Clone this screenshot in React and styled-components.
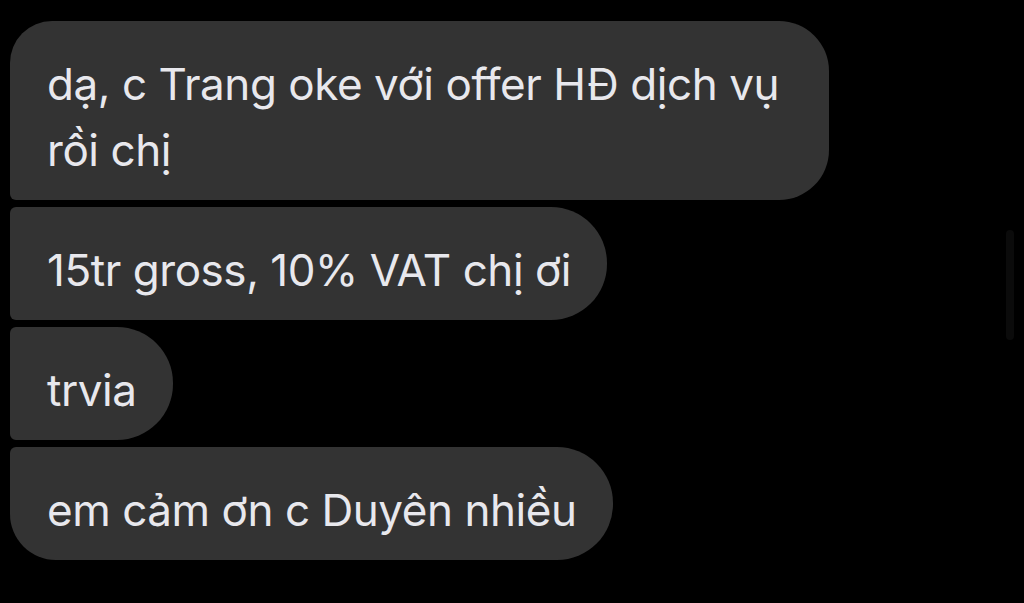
import styled, { createGlobalStyle } from "styled-components";

const GlobalStyle = createGlobalStyle`
  html, body {
    margin: 0;
    padding: 0;
    background: #000;
  }
  body {
    font-family: Inter, "Noto Sans", "Liberation Sans", sans-serif;
  }
`;

const Screen = styled.div`
  position: relative;
  width: 1024px;
  height: 603px;
  background: #000;
  overflow: hidden;
`;

const Thread = styled.div`
  display: flex;
  flex-direction: column;
  align-items: flex-start;
  gap: 7px;
  padding: 21px 0 0 10px;
`;

const radii = {
  first: "42px 50px 50px 6px",
  middle: "6px 56px 56px 6px",
  last: "6px 56px 56px 46px",
};

const Bubble = styled.div`
  box-sizing: border-box;
  max-width: 819px;
  padding: 30px 36px 17px 37px;
  background: #333333;
  color: #e8e8ed;
  font-size: 44px;
  line-height: 66px;
  letter-spacing: -0.45px;
  border-radius: ${(p) => radii[p.$pos]};
`;

const ScrollThumb = styled.div`
  position: absolute;
  left: 1006px;
  top: 230px;
  width: 8px;
  height: 110px;
  border-radius: 4px;
  background: #0b0b0b;
`;

const messages = [
  { text: "dạ, c Trang oke với offer HĐ dịch vụ rồi chị", pos: "first" },
  { text: "15tr gross, 10% VAT chị ơi", pos: "middle" },
  { text: "trvia", pos: "middle" },
  { text: "em cảm ơn c Duyên nhiều", pos: "last" },
];

export default function App() {
  return (
    <Screen>
      <GlobalStyle />
      <Thread>
        {messages.map((m, i) => (
          <Bubble key={i} $pos={m.pos}>
            {m.text}
          </Bubble>
        ))}
      </Thread>
      <ScrollThumb />
    </Screen>
  );
}
